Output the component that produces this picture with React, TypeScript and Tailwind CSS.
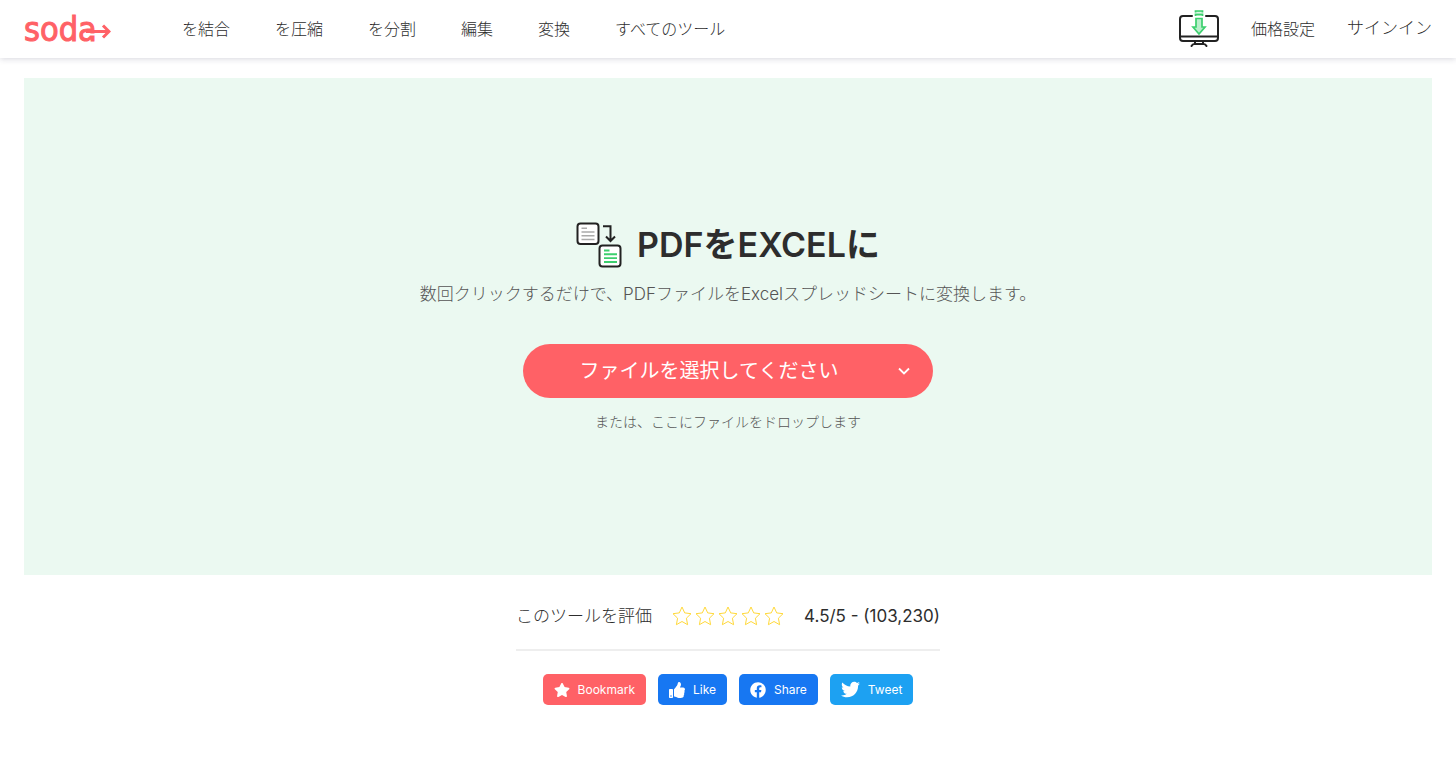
import { useState } from 'react';
import type { ReactNode } from 'react';
import { FaFacebook, FaStar, FaThumbsUp, FaTwitter } from 'react-icons/fa';

const navItems = ['を結合', 'を圧縮', 'を分割', '編集', '変換', 'すべてのツール'];

function Logo() {
  return (
    <a href="#" aria-label="soda" className="relative flex w-[87px] shrink-0 items-center text-[#ff6166]">
      <span className="font-['DejaVu_Sans_Condensed','DejaVu_Sans',sans-serif] text-[34px] leading-[34px] [-webkit-text-stroke:1px_#ff6166]">
        soda
      </span>
      {/* Arrow runs out of the bowl of the "a" */}
      <svg className="absolute right-0 top-[10px] h-[18px] w-[34px]" viewBox="0 0 34 18" fill="none">
        <path d="M11 12.500H19" stroke="#fff" strokeWidth="2" />
        <path d="M9 9.500H32M26 3.500L32 9.500L26 15.500" stroke="currentColor" strokeWidth="3" />
      </svg>
    </a>
  );
}

function DesktopIcon() {
  return (
    <svg className="h-[38px] w-10" viewBox="0 0 40 38" fill="none">
      <g stroke="#222" strokeWidth="2" strokeLinecap="round" strokeLinejoin="round">
        <path d="M13 6H4a3 3 0 0 0-3 3v19a3 3 0 0 0 3 3h32a3 3 0 0 0 3-3V9a3 3 0 0 0-3-3h-9" />
        <path d="M1 26.500h38M16 31.500v2.500M24 31.500v2.500M12.500 36q1-2 3-2h9q2 0 3 2" />
      </g>
      <g stroke="#3ccf6e" strokeWidth="1.700" fill="#b9efcb">
        <path d="M16.500 2.500V1h7v1.500M16.500 6V4.300h7V6" />
        <path d="M17 8.500h6v8.500h3l-6 7-6-7h3z" />
      </g>
    </svg>
  );
}

function ConvertIcon() {
  return (
    <svg className="h-[46px] w-[46px] shrink-0" viewBox="0 0 46 46" fill="none">
      <rect x="1.500" y="1.500" width="21" height="20.500" rx="3" fill="#fff" stroke="#222" strokeWidth="2" />
      <rect x="23.500" y="23.500" width="21" height="21" rx="3" fill="#fff" stroke="#222" strokeWidth="2" />
      <path d="M5.500 6.200h5.500M5.500 10h13M5.500 13.800h13M5.500 17.500h13" stroke="#aaa" strokeWidth="1.600" />
      <path d="M28 28.500h5.500M28 32.300h13M28 36.100h13M28 40h13" stroke="#3ccf6e" strokeWidth="1.900" />
      <path d="M27 4.200h7.500v14.500M30 14.500l4.500 4.500 4.500-4.500" stroke="#222" strokeWidth="2" />
    </svg>
  );
}

function Rating() {
  const [rating, setRating] = useState(0);

  return (
    <div className="flex gap-[3px]">
      {[1, 2, 3, 4, 5].map((value) => (
        <button key={value} type="button" aria-label={`${value} / 5`} onClick={() => setRating(value)}>
          <svg
            className="h-5 w-5"
            viewBox="0 0 20 20"
            fill={value <= rating ? '#ffd93b' : 'none'}
            stroke="#ffd93b"
            strokeLinejoin="round"
          >
            <path d="M10 1l2.700 5.900 6.300.8-4.600 4.500 1.200 6.500L10 15.500l-5.600 3.200 1.200-6.500L1 7.700l6.300-.8z" />
          </svg>
        </button>
      ))}
    </div>
  );
}

function SocialButton({ className, icon, label }: { className: string; icon: ReactNode; label: string }) {
  return (
    <button
      type="button"
      className={`flex h-[31px] items-center rounded-[5px] px-[11px] text-xs text-white ${className}`}
    >
      {icon}
      {label}
    </button>
  );
}

export default function App() {
  return (
    <div className="min-h-screen bg-white font-['Inter','Noto_Sans_CJK_JP',sans-serif] text-[#2d2d2d]" lang="ja">
      <header className="flex h-[58px] items-center px-6 shadow-[0_1px_6px_rgba(40,40,80,0.18)]">
        <Logo />
        <nav className="ml-[71px] flex gap-[45px] text-base font-light whitespace-nowrap">
          {navItems.map((item) => (
            <a key={item} href="#">
              {item}
            </a>
          ))}
        </nav>
        <div className="ml-auto flex items-center gap-8 font-light whitespace-nowrap">
          <a href="#" aria-label="Desktop">
            <DesktopIcon />
          </a>
          <a href="#">価格設定</a>
          <a href="#" className="text-[17px]">サインイン</a>
        </div>
      </header>

      <main>
        {/* Drop zone */}
        <section className="mx-6 mt-5 flex min-h-[497px] flex-col items-center bg-[#ebf9f1] px-4 pt-[144px] pb-16">
          <div className="flex items-center gap-[15px]">
            <ConvertIcon />
            <h1 className="text-[34px] leading-[46px] font-semibold">PDFをEXCELに</h1>
          </div>
          <p className="mt-3 text-center text-[17px] leading-7 font-light text-[#555]">
            数回クリックするだけで、PDFファイルをExcelスプレッドシートに変換します。
          </p>
          <div className="mt-9 flex h-[54px] w-full max-w-[410px] rounded-full bg-[#ff6166] text-white">
            <button type="button" className="flex-1 pl-5 text-xl">
              ファイルを選択してください
            </button>
            <button type="button" aria-label="その他" className="flex w-[58px] items-center justify-center">
              <svg className="h-3 w-3" viewBox="0 0 12 12" fill="none" stroke="currentColor" strokeWidth="1.800">
                <path d="M1 3.500l5 5 5-5" />
              </svg>
            </button>
          </div>
          <p className="mt-3 text-sm leading-6 font-light text-[#555]">または、ここにファイルをドロップします</p>
        </section>

        {/* Rating and sharing */}
        <section className="flex flex-col items-center px-4 pb-16">
          <div className="flex w-full max-w-[424px] items-center justify-between border-b-2 border-[#eee] pt-7 pb-5 text-[17px] leading-[26px]">
            <span className="font-light">このツールを評価</span>
            <Rating />
            <span>4.5/5 - (103,230)</span>
          </div>
          <div className="mt-[23px] flex flex-wrap gap-3">
            <SocialButton className="bg-[#ff6166]" icon={<FaStar className="mr-2 size-4" />} label="Bookmark" />
            <SocialButton className="bg-[#1777f2]" icon={<FaThumbsUp className="mr-2 size-4" />} label="Like" />
            <SocialButton className="bg-[#1777f2]" icon={<FaFacebook className="mr-2 size-4" />} label="Share" />
            <SocialButton className="bg-[#1da1f2]" icon={<FaTwitter className="mr-2 size-[19px]" />} label="Tweet" />
          </div>
        </section>
      </main>
    </div>
  );
}
